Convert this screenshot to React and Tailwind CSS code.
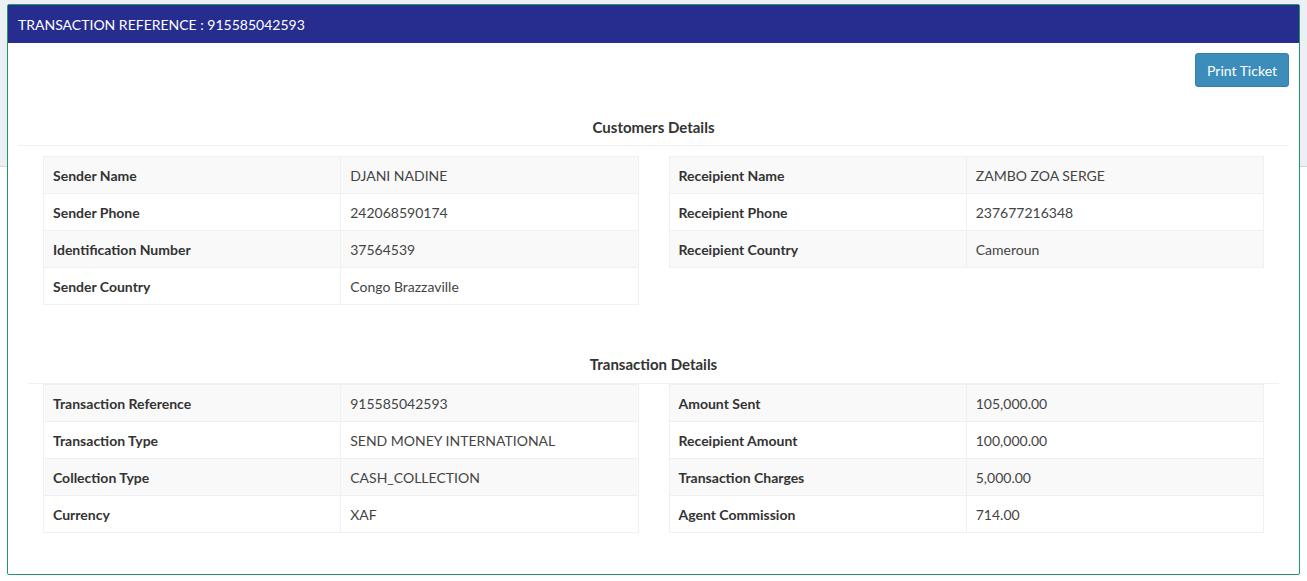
const customersLeft = [
  ['Sender Name', 'DJANI NADINE'],
  ['Sender Phone', '242068590174'],
  ['Identification Number', '37564539'],
  ['Sender Country', 'Congo Brazzaville'],
];

const customersRight = [
  ['Receipient Name', 'ZAMBO ZOA SERGE'],
  ['Receipient Phone', '237677216348'],
  ['Receipient Country', 'Cameroun'],
];

const txLeft = [
  ['Transaction Reference', '915585042593'],
  ['Transaction Type', 'SEND MONEY INTERNATIONAL'],
  ['Collection Type', 'CASH_COLLECTION'],
  ['Currency', 'XAF'],
];

const txRight = [
  ['Amount Sent', '105,000.00'],
  ['Receipient Amount', '100,000.00'],
  ['Transaction Charges', '5,000.00'],
  ['Agent Commission', '714.00'],
];

const DetailTable = ({ rows }) => (
  <table className="w-full border-collapse border border-[#f0f0f0] text-[14px] text-[#333]">
    <tbody>
      {rows.map(([label, value], idx) => (
        <tr key={idx} className={idx % 2 === 0 ? 'bg-[#f9f9f9]' : 'bg-white'}>
          <td className="w-1/2 h-[37px] px-[9px] border border-[#f0f0f0] font-bold text-[#333]">
            {label}
          </td>
          <td className="w-1/2 h-[37px] px-[9px] border border-[#f0f0f0] text-[#444]">{value}</td>
        </tr>
      ))}
    </tbody>
  </table>
);

const Section = ({ title, left, right, lineClass }) => (
  <div>
    <h3 className="text-center font-bold text-[15px] text-[#333] leading-[20px]">{title}</h3>
    <div className={lineClass} />
    <div className="grid grid-cols-2 gap-[30px] px-[35px]">
      <div>
        <DetailTable rows={left} />
      </div>
      <div>
        <DetailTable rows={right} />
      </div>
    </div>
  </div>
);

const App = () => {
  return (
    <div
      className="relative h-[581px] w-full overflow-hidden bg-white"
      style={{ fontFamily: 'Lato, "Noto Sans", sans-serif' }}
    >
      <div className="h-[167px] bg-[#ecf0f5] border-b border-[#d2d6de]" />
      <div className="absolute left-[7px] top-[4px] w-[1293px] h-[571px] bg-white border border-[#1f9a63] rounded-[2px]">
        <div className="h-[38px] bg-[#262d8f] flex items-center px-[10px]">
          <h2 className="text-white text-[14px]">
            TRANSACTION REFERENCE : 915585042593
          </h2>
        </div>
        <div className="flex justify-end pt-[10px] pr-[10px]">
          <button className="h-[34px] px-[11px] bg-[#3c8dbc] border border-[#367fa9] rounded-[3px] text-white text-[14px]">
            Print Ticket
          </button>
        </div>
        <div className="pt-[30px]">
          <Section
            title="Customers Details"
            left={customersLeft}
            right={customersRight}
            lineClass="mx-[10px] mt-[8px] mb-[10px] border-t border-[#f0f0f0]"
          />
        </div>
        <div className="pt-[49px]">
          <Section
            title="Transaction Details"
            left={txLeft}
            right={txRight}
            lineClass="mx-[20px] mt-[9px] border-t border-[#f0f0f0]"
          />
        </div>
      </div>
    </div>
  );
};

export default App;
